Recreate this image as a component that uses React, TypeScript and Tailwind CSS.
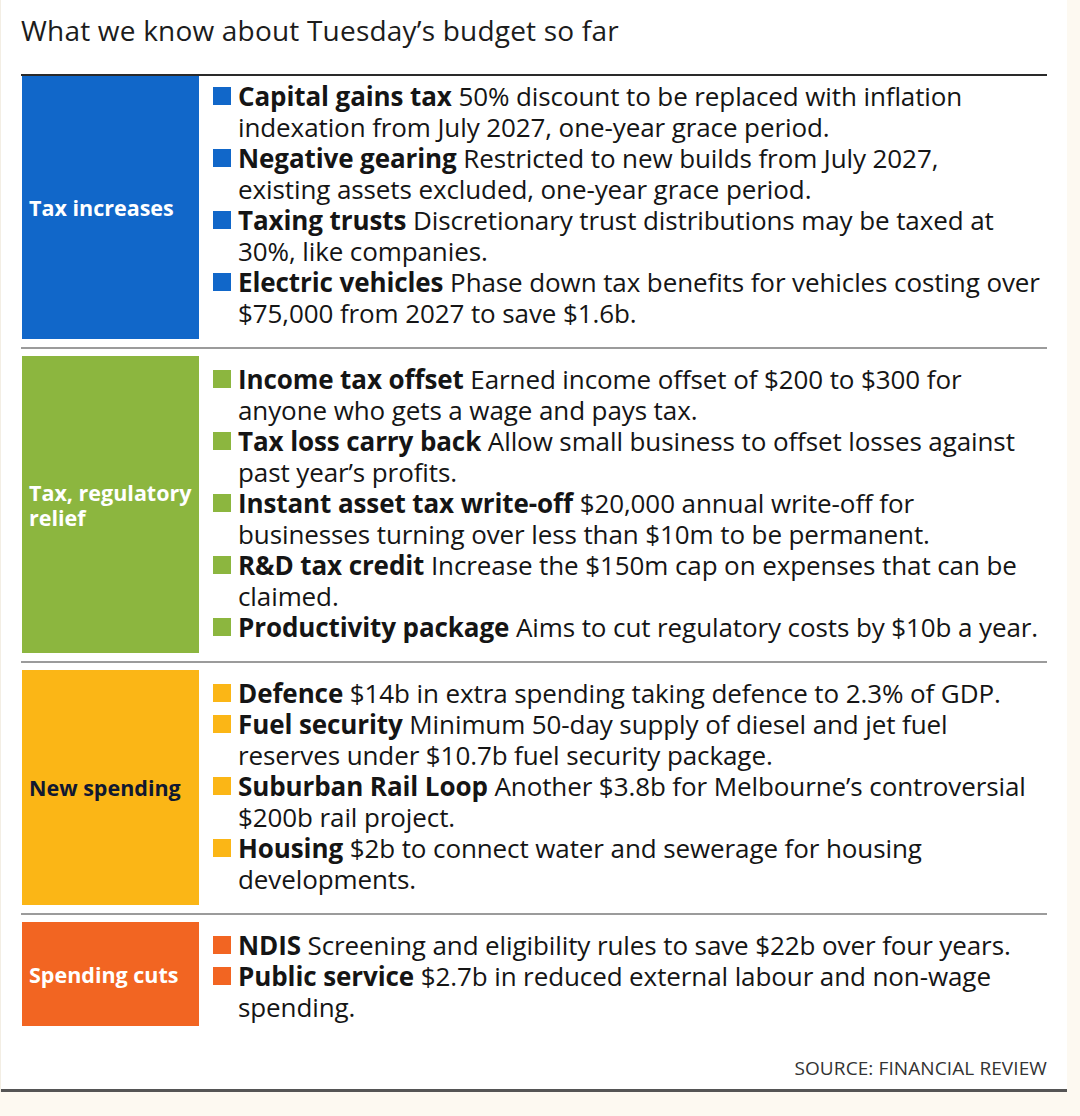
import React from "react";

interface Item {
  label: string;
  lines: string[];
}

interface Section {
  title: string[];
  color: string;
  titleColor: string;
  items: Item[];
}

const sections: Section[] = [
  {
    title: ["Tax increases"],
    color: "bg-[#1167c9]",
    titleColor: "text-white",
    items: [
      {
        label: "Capital gains tax",
        lines: ["50% discount to be replaced with inflation", "indexation from July 2027, one-year grace period."],
      },
      {
        label: "Negative gearing",
        lines: ["Restricted to new builds from July 2027,", "existing assets excluded, one-year grace period."],
      },
      {
        label: "Taxing trusts",
        lines: ["Discretionary trust distributions may be taxed at", "30%, like companies."],
      },
      {
        label: "Electric vehicles",
        lines: ["Phase down tax benefits for vehicles costing over", "$75,000 from 2027 to save $1.6b."],
      },
    ],
  },
  {
    title: ["Tax, regulatory", "relief"],
    color: "bg-[#8cb63f]",
    titleColor: "text-white",
    items: [
      {
        label: "Income tax offset",
        lines: ["Earned income offset of $200 to $300 for", "anyone who gets a wage and pays tax."],
      },
      {
        label: "Tax loss carry back",
        lines: ["Allow small business to offset losses against", "past year’s profits."],
      },
      {
        label: "Instant asset tax write-off",
        lines: ["$20,000 annual write-off for", "businesses turning over less than $10m to be permanent."],
      },
      {
        label: "R&D tax credit",
        lines: ["Increase the $150m cap on expenses that can be", "claimed."],
      },
      {
        label: "Productivity package",
        lines: ["Aims to cut regulatory costs by $10b a year."],
      },
    ],
  },
  {
    title: ["New spending"],
    color: "bg-[#fbb616]",
    titleColor: "text-[#101830]",
    items: [
      {
        label: "Defence",
        lines: ["$14b in extra spending taking defence to 2.3% of GDP."],
      },
      {
        label: "Fuel security",
        lines: ["Minimum 50-day supply of diesel and jet fuel", "reserves under $10.7b fuel security package."],
      },
      {
        label: "Suburban Rail Loop",
        lines: ["Another $3.8b for Melbourne’s controversial", "$200b rail project."],
      },
      {
        label: "Housing",
        lines: ["$2b to connect water and sewerage for housing", "developments."],
      },
    ],
  },
  {
    title: ["Spending cuts"],
    color: "bg-[#f26522]",
    titleColor: "text-white",
    items: [
      {
        label: "NDIS",
        lines: ["Screening and eligibility rules to save $22b over four years."],
      },
      {
        label: "Public service",
        lines: ["$2.7b in reduced external labour and non-wage", "spending."],
      },
    ],
  },
];

function BudgetRow({ section, first, last }: { section: Section; first: boolean; last: boolean }) {
  return (
    <div
      className={`flex gap-[14px] pl-px ${first ? "pt-0" : "pt-[7px]"} ${
        last ? "pb-0" : "pb-[8px] border-b-2 border-[#9b9b9b]"
      }`}
    >
      {/* Category box */}
      <div className={`w-[177px] shrink-0 flex items-center pl-[7px] ${section.color}`}>
        <div className={`text-[21.5px] font-bold leading-[25px] whitespace-nowrap ${section.titleColor}`}>
          {section.title.map((t) => (
            <div key={t}>{t}</div>
          ))}
        </div>
      </div>

      {/* Items */}
      <div className={`flex flex-col ${first ? "pt-[5px] pb-[10px]" : last ? "pt-2 pb-[3px]" : "pt-2 pb-2.5"}`}>
        {section.items.map((item) => (
          <div key={item.label} className="flex gap-[7px]">
            <div className="pt-[6px] shrink-0">
              <div className={`w-[18px] h-[18px] ${section.color}`} />
            </div>
            <div className="text-[26px] leading-[31px] text-[#151515] whitespace-nowrap tracking-[-0.1px]">
              {item.lines.map((line, i) => (
                <div key={i}>
                  {i === 0 && <span className="font-bold">{item.label} </span>}
                  {line}
                </div>
              ))}
            </div>
          </div>
        ))}
      </div>
    </div>
  );
}

export default function App() {
  return (
    <div className="min-h-[1116px] bg-[#fdf9f1]" style={{ fontFamily: "'Open Sans', 'Noto Sans', sans-serif" }}>
      <div className="w-[1067px] bg-white border-l border-[#f3eee4]">
        <div className="px-5 pt-[14px]">
          <h1 className="text-[28px] leading-[32px] text-[#1c1c1c] font-normal tracking-[0.2px]">
            What we know about Tuesday’s budget so far
          </h1>

          <div className="mt-[28px] border-t-2 border-[#2a2a2a]">
            {sections.map((s, i) => (
              <BudgetRow key={s.title.join(" ")} section={s} first={i === 0} last={i === sections.length - 1} />
            ))}
          </div>

          <div className="flex justify-end pt-[30px] pb-[9px]">
            <span className="text-[19px] leading-[24px] text-[#333] tracking-[0.1px]">SOURCE: FINANCIAL REVIEW</span>
          </div>
        </div>
        <div className="h-[3px] bg-[#555]" />
      </div>
    </div>
  );
}
